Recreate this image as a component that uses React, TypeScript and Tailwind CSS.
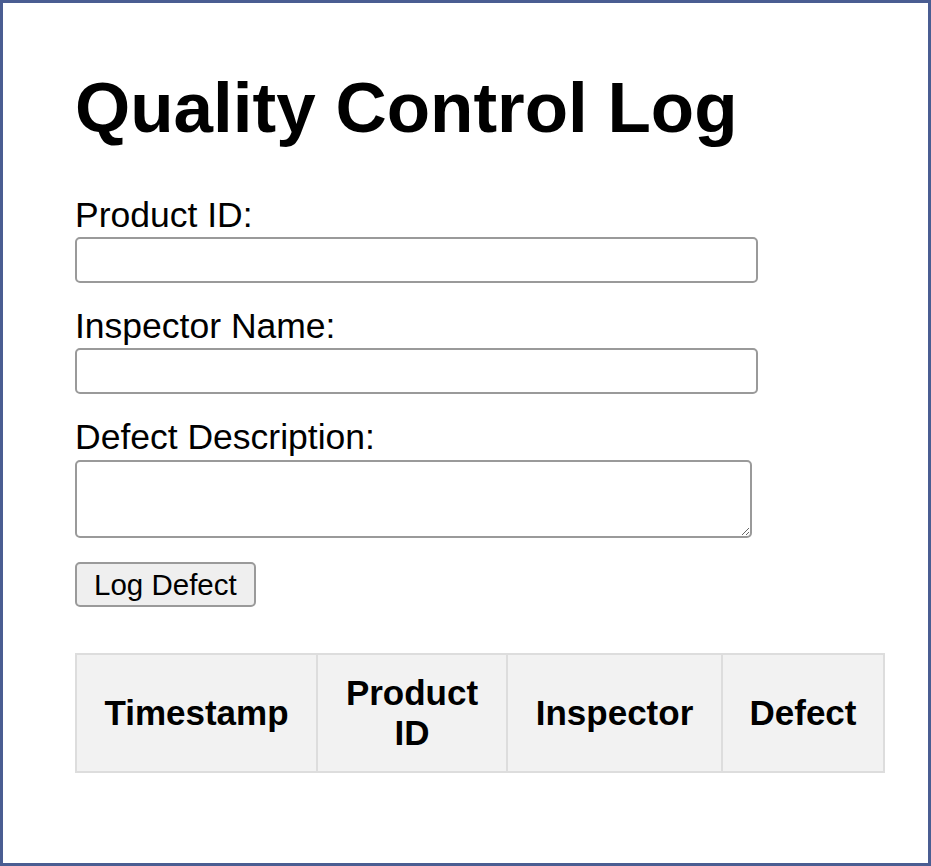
import React, { useState } from 'react';

// Quality Control Log - simple defect entry form with log table

interface DefectEntry {
  timestamp: string;
  productId: string;
  inspector: string;
  defect: string;
}

const App: React.FC = () => {
  const [productId, setProductId] = useState('');
  const [inspector, setInspector] = useState('');
  const [defect, setDefect] = useState('');
  const [entries, setEntries] = useState<DefectEntry[]>([]);

  const logDefect = () => {
    if (!productId || !inspector || !defect) return;
    setEntries(prev => [
      ...prev,
      { timestamp: new Date().toLocaleString(), productId, inspector, defect },
    ]);
    setProductId('');
    setInspector('');
    setDefect('');
  };

  return (
    <div className="w-[931px] h-[866px] bg-white border-[3px] border-[#4a5d92] pl-[72px] pt-[65px] font-['Liberation_Sans',Arial,sans-serif] text-black">
      <h1 className="text-[71px] leading-[80px] font-bold">Quality Control Log</h1>

      <div className="mt-[47px]">
        <label className="block text-[35.5px] leading-[40px] mb-[2px]">Product ID:</label>
        <input
          type="text"
          value={productId}
          onChange={e => setProductId(e.target.value)}
          className="block w-[683px] h-[46px] border-2 border-[#9a9a9a] rounded-[5px] px-[4px] text-[29px]"
        />
      </div>

      <div className="mt-[23px]">
        <label className="block text-[35.5px] leading-[40px] mb-[2px]">Inspector Name:</label>
        <input
          type="text"
          value={inspector}
          onChange={e => setInspector(e.target.value)}
          className="block w-[683px] h-[46px] border-2 border-[#9a9a9a] rounded-[5px] px-[4px] text-[29px]"
        />
      </div>

      <div className="mt-[23px]">
        <label className="block text-[35.5px] leading-[40px] mb-[3px]">Defect Description:</label>
        <textarea
          value={defect}
          onChange={e => setDefect(e.target.value)}
          className="block w-[677px] h-[78px] border-2 border-[#9a9a9a] rounded-[5px] px-[4px] text-[29px]"
        />
      </div>

      <button
        onClick={logDefect}
        className="block mt-[24px] h-[45px] px-[17px] bg-[#efefef] border-2 border-[#9a9a9a] rounded-[5px] text-[29.5px] leading-[34px]"
      >
        Log Defect
      </button>

      <table className="mt-[46px] w-[808px] table-fixed border-collapse">
        <colgroup>
          <col className="w-[241px]" />
          <col className="w-[190px]" />
          <col className="w-[215px]" />
          <col className="w-[162px]" />
        </colgroup>
        <thead>
          <tr>
            {['Timestamp', 'Product ID', 'Inspector', 'Defect'].map(h => (
              <th
                key={h}
                className="bg-[#f2f2f2] border-2 border-[#dddddd] px-[18px] py-[18px] text-[35px] leading-[40px] font-bold text-center"
              >
                {h}
              </th>
            ))}
          </tr>
        </thead>
        <tbody>
          {entries.map((entry, i) => (
            <tr key={i}>
              <td className="border-2 border-[#dddddd] px-[18px] py-[18px] text-[35px]">{entry.timestamp}</td>
              <td className="border-2 border-[#dddddd] px-[18px] py-[18px] text-[35px]">{entry.productId}</td>
              <td className="border-2 border-[#dddddd] px-[18px] py-[18px] text-[35px]">{entry.inspector}</td>
              <td className="border-2 border-[#dddddd] px-[18px] py-[18px] text-[35px]">{entry.defect}</td>
            </tr>
          ))}
        </tbody>
      </table>
    </div>
  );
};

export default App;
